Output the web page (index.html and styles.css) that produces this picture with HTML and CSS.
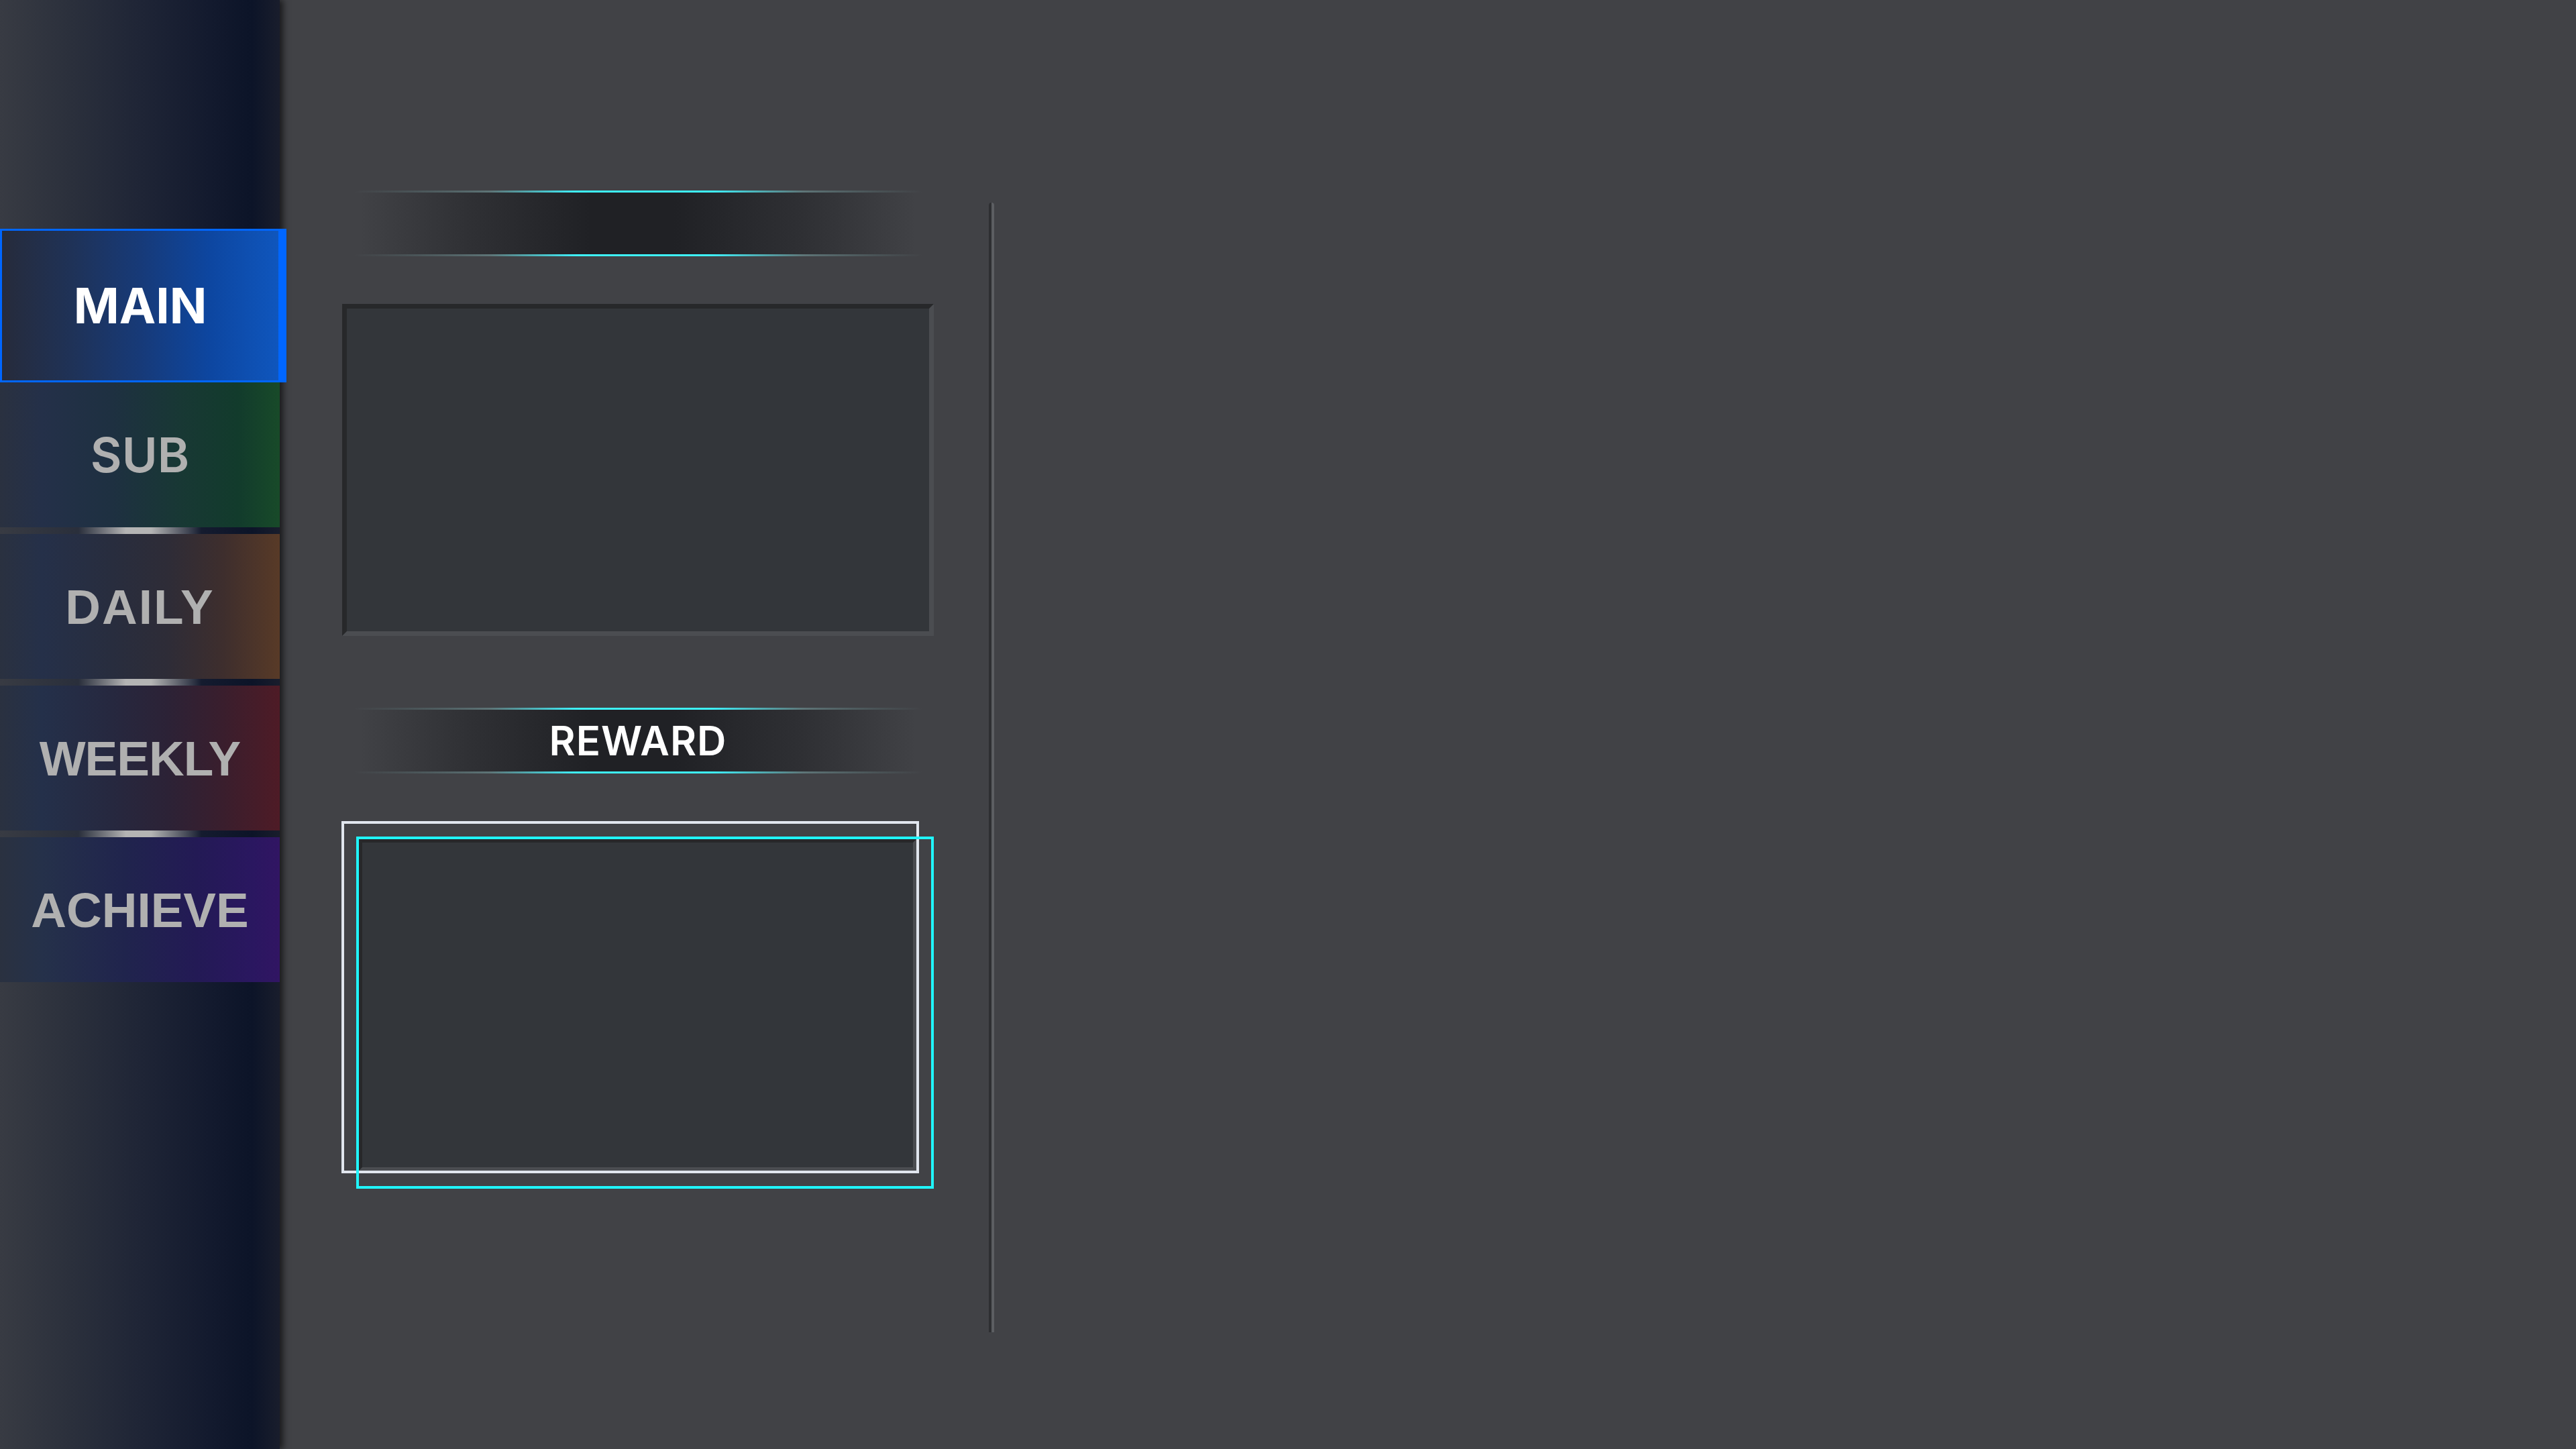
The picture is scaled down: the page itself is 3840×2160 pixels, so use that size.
FILE: index.html
```html
<!DOCTYPE html>
<html lang="en">
<head>
<meta charset="utf-8">
<title>Quests</title>
<link rel="stylesheet" href="styles.css">
</head>
<body>
<div class="app">
  <nav class="sidebar">
    <div class="tab tab-main">MAIN</div>
    <div class="tab tab-sub">SUB</div>
    <div class="sep"></div>
    <div class="tab tab-daily">DAILY</div>
    <div class="sep"></div>
    <div class="tab tab-weekly">WEEKLY</div>
    <div class="sep"></div>
    <div class="tab tab-achieve">ACHIEVE</div>
  </nav>
  <main class="content">
    <section class="column">
      <div class="title-bar"></div>
      <div class="panel panel-top"></div>
      <div class="title-bar title-reward">REWARD</div>
      <div class="reward-frame">
        <div class="panel panel-reward"></div>
      </div>
    </section>
    <div class="divider"></div>
  </main>
</div>
</body>
</html>
```
FILE: styles.css
```css
html, body {
  margin: 0;
  padding: 0;
  background: #414246;
}

.app {
  display: flex;
  width: 3840px;
  height: 2160px;
  overflow: hidden;
  background: #414246;
}

/* ---------- sidebar ---------- */
.sidebar {
  position: relative;
  z-index: 1;
  flex: none;
  width: 417px;
  height: 2160px;
  box-sizing: border-box;
  padding-top: 341px;
  display: flex;
  flex-direction: column;
  background: linear-gradient(90deg, #383b43 0%, #2b303c 25%, #1f2536 50%, #131a2e 75%, #0c1428 90%, #191d2c 100%);
  box-shadow: 5px 0 9px rgba(0, 0, 0, 0.6);
}

.tab {
  flex: none;
  width: 417px;
  height: 216px;
  box-sizing: border-box;
  display: flex;
  align-items: center;
  justify-content: center;
  font-family: "Liberation Sans", Arial, sans-serif;
  font-weight: 700;
  font-size: 73px;
  line-height: 1;
  color: #b0b0b0;
}

.tab-main {
  width: 427px;
  height: 229px;
  border: 3px solid #0066ff;
  border-right-width: 12px;
  font-family: Inter, "Noto Sans", sans-serif;
  font-size: 73px;
  font-weight: 700;
  color: #ffffff;
  background: linear-gradient(90deg, #262b3b 0%, #1f3257 25%, #173a78 50%, #0d46a0 75%, #0f56bd 100%);
}

.tab-sub {
  font-family: Inter, "Noto Sans", sans-serif;
  font-size: 72px;
  font-weight: 600;
  background: linear-gradient(90deg, #2a3140 0%, #243049 15%, #1e3041 40%, #183834 65%, #123b2c 85%, #184a29 100%);
}

.tab-daily {
  letter-spacing: 2px;
  background: linear-gradient(90deg, #2a3140 0%, #253049 15%, #282d3e 40%, #2e2c37 60%, #3e2e2d 80%, #583a27 100%);
}

.tab-weekly {
  letter-spacing: -1px;
  background: linear-gradient(90deg, #2a3140 0%, #24304a 15%, #26283f 40%, #2c2236 60%, #3a1e2d 80%, #4e1b26 100%);
}

.tab-achieve {
  background: linear-gradient(90deg, #2a3140 0%, #25314a 15%, #20244d 45%, #231a55 70%, #2a1760 90%, #311563 100%);
}

.sep {
  flex: none;
  height: 10px;
  background: linear-gradient(90deg, rgba(180, 180, 180, 0) 28%, #b4b4b4 45%, #b4b4b4 54%, rgba(180, 180, 180, 0) 72%);
}

/* ---------- content ---------- */
.content {
  flex: 1;
  display: flex;
  align-items: flex-start;
  padding-left: 93px;
}

.column {
  flex: none;
  width: 882px;
  padding-top: 284px;
  display: flex;
  flex-direction: column;
}

.title-bar {
  height: 98px;
  display: flex;
  align-items: center;
  justify-content: center;
  font-family: Inter, "Noto Sans", sans-serif;
  font-weight: 600;
  font-size: 60px;
  line-height: 1;
  letter-spacing: 1px;
  color: #ffffff;
  background:
    linear-gradient(90deg, rgba(90, 110, 112, 0) 2%, rgba(110, 140, 142, 0.75) 25%, #3ef5ff 40%, #3ef5ff 62%, rgba(110, 140, 142, 0.75) 78%, rgba(90, 110, 112, 0) 98%) top / 100% 3px no-repeat,
    linear-gradient(90deg, rgba(90, 110, 112, 0) 2%, rgba(110, 140, 142, 0.75) 25%, #3ef5ff 40%, #3ef5ff 62%, rgba(110, 140, 142, 0.75) 78%, rgba(90, 110, 112, 0) 98%) bottom / 100% 3px no-repeat,
    linear-gradient(90deg, rgba(32, 33, 37, 0) 3%, rgba(32, 33, 37, 0.55) 22%, #202125 42%, #202125 56%, rgba(32, 33, 37, 0.55) 78%, rgba(32, 33, 37, 0) 97%);
}

.title-reward {
  margin-top: 107px;
}

.panel {
  box-sizing: border-box;
  background: #33363a;
  border-style: solid;
  border-color: #27282a #4b4d51 #4b4d51 #27282a;
}

.panel-top {
  margin-top: 71px;
  height: 495px;
  border-width: 7px;
}

.reward-frame {
  position: relative;
  margin-top: 71px;
  margin-left: -1px;
  height: 548px;
  padding: 27px 0 0 26px;
  box-sizing: border-box;
}

.reward-frame::before,
.reward-frame::after {
  content: "";
  position: absolute;
  width: 861px;
  height: 525px;
  box-sizing: border-box;
  border: 4px solid #e1e6ee;
}

.reward-frame::before {
  left: 0;
  top: 0;
}

.reward-frame::after {
  left: 22px;
  top: 23px;
  border-color: #20f5fd;
}

.panel-reward {
  width: 831px;
  height: 494px;
  border-width: 5px;
}

.divider {
  flex: none;
  width: 8px;
  height: 1684px;
  margin-left: 82px;
  margin-top: 302px;
  border-radius: 4px 4px 0 0;
  background: linear-gradient(90deg, #2e2f32 50%, #5c5e62 50%);
}
```
